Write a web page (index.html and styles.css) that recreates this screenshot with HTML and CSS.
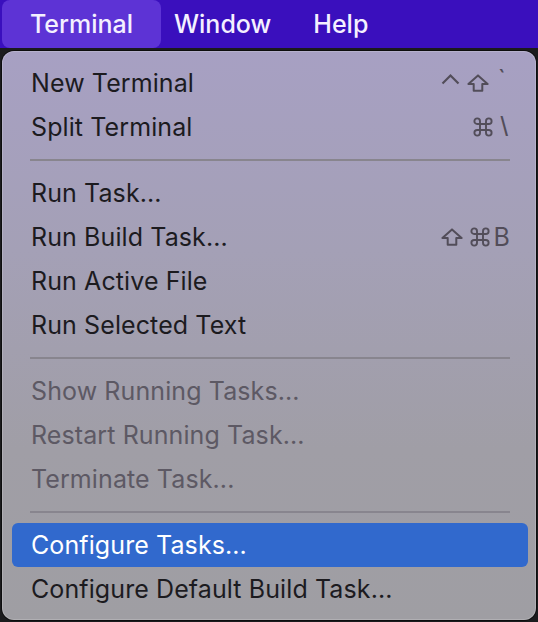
FILE: index.html
```html
<!DOCTYPE html>
<html>
<head>
<meta charset="utf-8">
<link rel="stylesheet" href="styles.css">
</head>
<body>
<div class="menubar">
  <div class="mb-item mb-active">Terminal</div>
  <div class="mb-item mb-window">Window</div>
  <div class="mb-item mb-help">Help</div>
</div>
<div class="menu">
  <div class="row">
    <span class="label">New Terminal</span>
    <span class="keys">
      <svg class="k-ctrl" width="19" height="12" viewBox="0 0 19 12"><polyline points="1.5,10.5 9.5,2.5 17.5,10.5" fill="none" stroke="currentColor" stroke-width="2.2" stroke-linejoin="miter"/></svg>
      <svg class="k-shift" width="22" height="18" viewBox="0 0 22 18"><path d="M11 1.4 L20.6 10 H15.3 V16.8 H6.7 V10 H1.4 Z" fill="none" stroke="currentColor" stroke-width="2" stroke-linejoin="round"/></svg>
      <span class="k-text k-tick">`</span>
    </span>
  </div>
  <div class="row">
    <span class="label">Split Terminal</span>
    <span class="keys">
      <svg class="k-cmd" width="20" height="20" viewBox="0 0 20 20"><path d="M7 4.2v11.6a2.8 2.8 0 1 1-2.8-2.8h11.6a2.8 2.8 0 1 1-2.8 2.8V4.2a2.8 2.8 0 1 1 2.8 2.8H4.2A2.8 2.8 0 1 1 7 4.2z" fill="none" stroke="currentColor" stroke-width="1.9"/></svg>
      <span class="k-text k-bslash">\</span>
    </span>
  </div>
  <div class="sep"></div>
  <div class="row"><span class="label">Run Task...</span></div>
  <div class="row">
    <span class="label">Run Build Task...</span>
    <span class="keys">
      <svg class="k-shift2" width="22" height="18" viewBox="0 0 22 18"><path d="M11 1.4 L20.6 10 H15.3 V16.8 H6.7 V10 H1.4 Z" fill="none" stroke="currentColor" stroke-width="2" stroke-linejoin="round"/></svg>
      <svg class="k-cmd2" width="20" height="20" viewBox="0 0 20 20"><path d="M7 4.2v11.6a2.8 2.8 0 1 1-2.8-2.8h11.6a2.8 2.8 0 1 1-2.8 2.8V4.2a2.8 2.8 0 1 1 2.8 2.8H4.2A2.8 2.8 0 1 1 7 4.2z" fill="none" stroke="currentColor" stroke-width="1.9"/></svg>
      <span class="k-text k-b">B</span>
    </span>
  </div>
  <div class="row"><span class="label">Run Active File</span></div>
  <div class="row"><span class="label">Run Selected Text</span></div>
  <div class="sep"></div>
  <div class="row disabled"><span class="label">Show Running Tasks...</span></div>
  <div class="row disabled"><span class="label">Restart Running Task...</span></div>
  <div class="row disabled"><span class="label">Terminate Task...</span></div>
  <div class="sep"></div>
  <div class="row selected"><span class="label">Configure Tasks...</span></div>
  <div class="row"><span class="label">Configure Default Build Task...</span></div>
</div>
</body>
</html>
```
FILE: styles.css
```css
html, body {
  margin: 0;
  padding: 0;
}
body {
  width: 538px;
  height: 622px;
  overflow: hidden;
  background: #1b1b1d;
  font-family: Inter, "Liberation Sans", sans-serif;
}
.menubar {
  height: 48px;
  background: #3a0fbd;
  display: flex;
  align-items: stretch;
}
.mb-item {
  display: flex;
  align-items: center;
  color: #f4f0ff;
  font-size: 25px;
  font-weight: 500;
}
.mb-active {
  margin-left: 2px;
  width: 159px;
  justify-content: center;
  background: #5d33d5;
  border-radius: 8px;
}
.mb-window {
  margin-left: 13px;
}
.mb-help {
  margin-left: 42px;
}
.menu {
  margin: 3px 0 0 2px;
  width: 534px;
  height: 569px;
  box-sizing: border-box;
  padding: 10px 8px 8px 10px;
  border-radius: 12px;
  background: linear-gradient(180deg, #a7a0c3 0%, #a4a0b6 35%, #a09ea6 70%, #9f9ea3 100%);
  box-shadow: inset 0 0 0 1px rgba(255,255,255,0.18), 0 0 0 1px rgba(0,0,0,0.5);
}
.row {
  height: 44px;
  display: flex;
  align-items: center;
  justify-content: space-between;
  padding: 0 18px 0 19px;
  border-radius: 6px;
  color: #1c1b1f;
  font-size: 25px;
  letter-spacing: 0.1px;
}
.label {
  line-height: 44px;
}
.disabled {
  color: #5d5964;
}
.selected {
  background: #3169cd;
  color: #ffffff;
}
.keys {
  display: flex;
  align-items: center;
  height: 44px;
  color: #524d59;
}
.keys svg {
  display: block;
}
.k-ctrl {
  margin-top: -9px;
}
.k-shift {
  margin-left: 7px;
}
.k-text {
  font-size: 25px;
  line-height: 25px;
}
.k-tick {
  margin-left: 9px;
  margin-top: -7px;
  margin-right: 4px;
}
.k-bslash {
  margin-left: 7px;
  margin-right: 2px;
  font-size: 27px;
  font-family: "Liberation Sans", sans-serif;
}
.k-cmd2 {
  margin-left: 7px;
}
.k-b {
  margin-left: 4px;
}
.sep {
  height: 2px;
  margin: 10px 18px 10px 18px;
  background: #88858e;
}
```
